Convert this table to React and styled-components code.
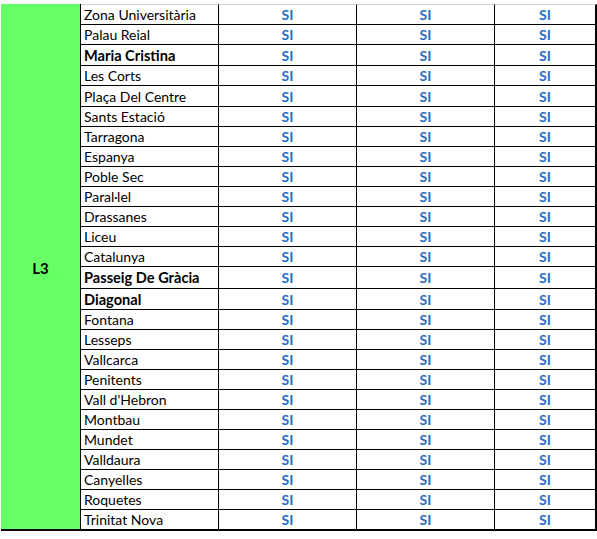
import React from 'react';
import styled, { createGlobalStyle } from 'styled-components';

const Global = createGlobalStyle`
  html, body { margin: 0; padding: 0; background: #fff; }
  body { font-family: Lato, "Open Sans", sans-serif; }
`;

const Page = styled.div`
  padding: 4px 0 0 1px;
`;

const Sheet = styled.div`
  display: grid;
  grid-template-columns: 80px 138px 138px 138px 102px;
  font-family: Lato, "Open Sans", sans-serif;
  font-size: 14px;
  color: #000;
`;

const LineCell = styled.div`
  grid-column: 1;
  grid-row: 1 / span ${(p) => p.$rows};
  box-sizing: border-box;
  background: #66ff66;
  border-right: 1px solid #000;
  border-bottom: 2px solid #000;
  display: flex;
  align-items: center;
  justify-content: center;
  font-weight: 700;
  font-size: 15px;
  padding-top: 2px;
`;

const Cell = styled.div`
  box-sizing: border-box;
  height: ${(p) => p.$h}px;
  border-right: ${(p) => (p.$lastCol ? '2px' : '1px')} solid #000;
  border-bottom: ${(p) => (p.$lastRow ? '2px' : '1px')} solid #000;
  border-top: ${(p) => (p.$firstRow ? '1px solid #d4d4d4' : 'none')};
  display: flex;
  align-items: center;
  white-space: nowrap;
  overflow: hidden;
`;

const NameCell = styled(Cell)`
  padding-left: 3px;
  font-weight: ${(p) => (p.$bold ? 700 : 400)};
  font-size: ${(p) => (p.$bold ? '14.6px' : '14px')};
`;

const SiCell = styled(Cell)`
  justify-content: center;
  color: #1f6fc4;
  font-weight: 700;
`;

// [name, bold, extra row height]
const stations = [
  ['Zona Universitària'],
  ['Palau Reial'],
  ['Maria Cristina', true, 1],
  ['Les Corts'],
  ['Plaça Del Centre', false, 1],
  ['Sants Estació'],
  ['Tarragona'],
  ['Espanya'],
  ['Poble Sec'],
  ['Paral·lel'],
  ['Drassanes'],
  ['Liceu'],
  ['Catalunya'],
  ['Passeig De Gràcia', true, 2],
  ['Diagonal', true, 1],
  ['Fontana'],
  ['Lesseps'],
  ['Vallcarca'],
  ['Penitents'],
  ["Vall d'Hebron"],
  ['Montbau'],
  ['Mundet'],
  ['Valldaura'],
  ['Canyelles'],
  ['Roquetes'],
  ['Trinitat Nova'],
];

export default function App() {
  const n = stations.length;
  return (
    <Page>
      <Global />
      <Sheet>
        <LineCell $rows={n}>L3</LineCell>
        {stations.map(([name, bold, extra = 0], i) => {
          const first = i === 0;
          const last = i === n - 1;
          const h = 20 + extra + (first ? 1 : 0) + (last ? 1 : 0);
          return (
            <React.Fragment key={name}>
              <NameCell $h={h} $bold={bold} $firstRow={first} $lastRow={last}>
                {name}
              </NameCell>
              {[0, 1, 2].map((c) => (
                <SiCell
                  key={c}
                  $h={h}
                  $firstRow={first}
                  $lastRow={last}
                  $lastCol={c === 2}
                >
                  SI
                </SiCell>
              ))}
            </React.Fragment>
          );
        })}
      </Sheet>
    </Page>
  );
}
